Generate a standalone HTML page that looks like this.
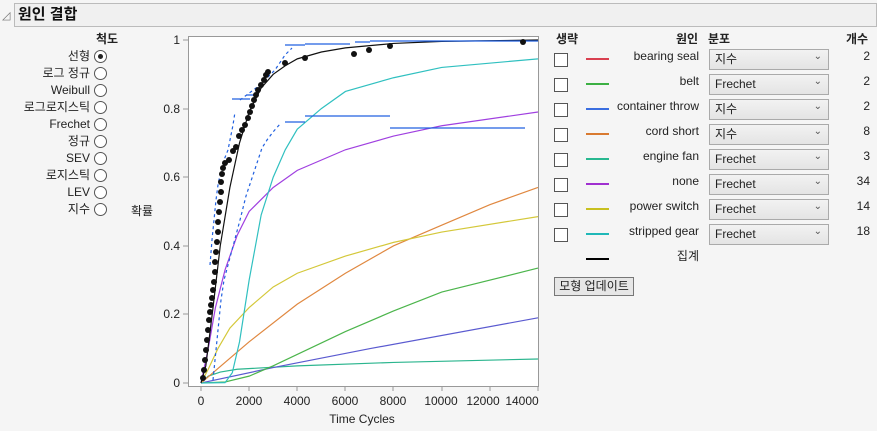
<!DOCTYPE html>
<html><head><meta charset="utf-8"><style>
body{margin:0;width:877px;height:431px;background:#f5f5f5;font-family:"Liberation Sans","Noto Sans CJK KR",sans-serif;font-size:12px;color:#222;position:relative;overflow:hidden}
.a{position:absolute;white-space:nowrap;line-height:16px}
.r{text-align:right}
.rad{position:absolute;width:11px;height:11px;border:1px solid #555;border-radius:50%;background:#fff}
.cb{position:absolute;width:12px;height:12px;border:1px solid #555;background:#fff}
.sw{position:absolute;width:23px;height:2px}
.dd{position:absolute;left:709px;width:118px;height:19px;border:1px solid #aaa;background:linear-gradient(#f2f2f2,#e4e4e4);font-size:12px;line-height:19px;text-indent:5px}
.dd:after{content:"⌄";position:absolute;right:6px;top:-3px;font-size:10px;color:#555}
</style></head><body>
<div class="a" style="left:2px;top:8px;font-size:11px;color:#777">◿</div>
<div class="a" style="left:14px;top:3px;width:861px;height:22px;background:#f0f0f0;border:1px solid #bbb"></div>
<div class="a" style="left:18px;top:5px;font-size:15px;line-height:20px;font-weight:bold;color:#111">원인 결합</div>

<div class="a" style="left:96px;top:31px;font-weight:bold">척도</div>
<div class="a r" style="right:787px;top:48px">선형</div><div class="rad" style="left:94px;top:50px"></div><div class="a" style="left:98px;top:54px;width:5px;height:5px;border-radius:50%;background:#222"></div>
<div class="a r" style="right:787px;top:65px">로그 정규</div><div class="rad" style="left:94px;top:67px"></div>
<div class="a r" style="right:787px;top:82px">Weibull</div><div class="rad" style="left:94px;top:84px"></div>
<div class="a r" style="right:787px;top:99px">로그로지스틱</div><div class="rad" style="left:94px;top:101px"></div>
<div class="a r" style="right:787px;top:116px">Frechet</div><div class="rad" style="left:94px;top:118px"></div>
<div class="a r" style="right:787px;top:133px">정규</div><div class="rad" style="left:94px;top:135px"></div>
<div class="a r" style="right:787px;top:150px">SEV</div><div class="rad" style="left:94px;top:152px"></div>
<div class="a r" style="right:787px;top:167px">로지스틱</div><div class="rad" style="left:94px;top:169px"></div>
<div class="a r" style="right:787px;top:184px">LEV</div><div class="rad" style="left:94px;top:186px"></div>
<div class="a r" style="right:787px;top:201px">지수</div><div class="rad" style="left:94px;top:203px"></div>
<div class="a" style="left:131px;top:203px">확률</div>

<svg class="a" style="left:0;top:0" width="877" height="431">
<rect x="188.5" y="36.5" width="350" height="350" fill="#fff" stroke="#999"/>
<g stroke="#999"><line x1="183" y1="40" x2="188" y2="40"/><line x1="183" y1="109" x2="188" y2="109"/><line x1="183" y1="177" x2="188" y2="177"/><line x1="183" y1="246" x2="188" y2="246"/><line x1="183" y1="314" x2="188" y2="314"/><line x1="183" y1="383" x2="188" y2="383"/>
<line x1="201" y1="387" x2="201" y2="391"/><line x1="249" y1="387" x2="249" y2="391"/><line x1="297" y1="387" x2="297" y2="391"/><line x1="345" y1="387" x2="345" y2="391"/><line x1="393" y1="387" x2="393" y2="391"/><line x1="442" y1="387" x2="442" y2="391"/><line x1="490" y1="387" x2="490" y2="391"/><line x1="538" y1="387" x2="538" y2="391"/></g>
<g font-family="Liberation Sans,sans-serif" font-size="12" fill="#222" text-anchor="end">
<text x="180" y="44">1</text><text x="180" y="113">0.8</text><text x="180" y="181">0.6</text><text x="180" y="250">0.4</text><text x="180" y="318">0.2</text><text x="180" y="387">0</text></g>
<g font-family="Liberation Sans,sans-serif" font-size="12" fill="#222" text-anchor="middle">
<text x="201" y="405">0</text><text x="249" y="405">2000</text><text x="297" y="405">4000</text><text x="345" y="405">6000</text><text x="393" y="405">8000</text><text x="441" y="405">10000</text><text x="483" y="405">12000</text><text x="522" y="405">14000</text>
<text x="362" y="423">Time Cycles</text></g>
<g transform="translate(201,383) scale(0.02407,-343)" fill="none" stroke-width="1.2">
<path vector-effect="non-scaling-stroke" stroke="#2bb58e" d="M0 0 L300 0.02 L800 0.032 L1500 0.04 L4000 0.05 L8000 0.06 L14000 0.07"/>
<path vector-effect="non-scaling-stroke" stroke="#5a5ad0" d="M0 0 L3000 0.045 L7000 0.1 L14000 0.19"/>
<path vector-effect="non-scaling-stroke" stroke="#4cb54c" d="M0 0 L1000 0.003 L2000 0.02 L3000 0.05 L4500 0.1 L6000 0.15 L8000 0.21 L10000 0.265 L14000 0.335"/>
<path vector-effect="non-scaling-stroke" stroke="#e08840" d="M0 0 L2000 0.12 L4000 0.23 L6000 0.32 L8000 0.4 L10000 0.46 L12000 0.52 L14000 0.57"/>
<path vector-effect="non-scaling-stroke" stroke="#d4c83a" d="M0 0 L300 0.04 L700 0.1 L1200 0.16 L2000 0.22 L3000 0.28 L4000 0.32 L6000 0.37 L8000 0.41 L10000 0.44 L14000 0.485"/>
<path vector-effect="non-scaling-stroke" stroke="#a040e0" d="M0 0 L300 0.1 L600 0.22 L1000 0.33 L1500 0.43 L2000 0.5 L3000 0.57 L4000 0.62 L6000 0.68 L8000 0.72 L10000 0.75 L14000 0.79"/>
<path vector-effect="non-scaling-stroke" stroke="#30c0c0" d="M0 0 L1000 0.001 L1300 0.03 L1600 0.12 L2000 0.3 L2500 0.49 L3000 0.6 L3500 0.68 L4000 0.74 L5000 0.8 L6000 0.85 L8000 0.89 L10000 0.92 L14000 0.945"/>
<path vector-effect="non-scaling-stroke" stroke="#111" d="M0 0 L200 0.05 L500 0.22 L800 0.4 L1200 0.57 L1600 0.7 L2000 0.79 L2500 0.86 L3000 0.9 L3500 0.925 L4000 0.945 L5000 0.965 L6000 0.977 L8000 0.99 L10000 0.996 L14000 1"/>
</g>
<g stroke="#2060e0" stroke-width="1.2" fill="none" stroke-dasharray="3 3">
<path d="M210 265 L212 240 L214 220 L216 200 L218 185 L221 170 L224 160 L228 150 L230 140 L233 125 L235 112"/>
<path d="M240 100 L260 85 L275 70 L285 55 L292 48"/>
<path d="M213 380 L215 360 L217 340 L219 320 L221 300 L224 280 L228 265 L232 250 L236 235 L240 220 L243 208 L246 196 L250 184 L254 172 L258 160 L262 148 L267 140 L273 132 L280 124"/>
</g>
<g stroke="#2060e0" stroke-width="1.2" fill="none">
<path d="M232 99 L250 99 M247 95 L257 95 M285 45 L305 45 M305 44 L350 44 M355 42 L370 42 M370 41 L538 41"/>
<path d="M285 122 L305 122 M305 116 L390 116 M390 128 L525 128"/>
</g>
<g fill="#111">
<circle cx="203" cy="378" r="3"/><circle cx="204" cy="370" r="3"/><circle cx="205" cy="360" r="3"/><circle cx="206" cy="350" r="3"/><circle cx="207" cy="340" r="3"/><circle cx="208" cy="330" r="3"/><circle cx="209" cy="320" r="3"/><circle cx="210" cy="312" r="3"/><circle cx="211" cy="305" r="3"/><circle cx="212" cy="298" r="3"/><circle cx="213" cy="290" r="3"/><circle cx="214" cy="282" r="3"/><circle cx="215" cy="272" r="3"/><circle cx="215" cy="262" r="3"/><circle cx="216" cy="252" r="3"/><circle cx="217" cy="242" r="3"/><circle cx="218" cy="232" r="3"/><circle cx="218" cy="222" r="3"/><circle cx="219" cy="212" r="3"/><circle cx="220" cy="202" r="3"/><circle cx="221" cy="192" r="3"/><circle cx="221" cy="182" r="3"/><circle cx="222" cy="174" r="3"/><circle cx="223" cy="168" r="3"/><circle cx="225" cy="163" r="3"/><circle cx="229" cy="160" r="3"/><circle cx="233" cy="151" r="3"/><circle cx="236" cy="147" r="3"/><circle cx="239" cy="136" r="3"/><circle cx="242" cy="130" r="3"/><circle cx="245" cy="125" r="3"/><circle cx="248" cy="118" r="3"/><circle cx="250" cy="112" r="3"/><circle cx="252" cy="106" r="3"/><circle cx="254" cy="100" r="3"/><circle cx="256" cy="95" r="3"/><circle cx="258" cy="90" r="3"/><circle cx="261" cy="85" r="3"/><circle cx="264" cy="80" r="3"/><circle cx="266" cy="75" r="3"/><circle cx="268" cy="72" r="3"/><circle cx="285" cy="63" r="3"/><circle cx="305" cy="58" r="3"/><circle cx="354" cy="54" r="3"/><circle cx="369" cy="50" r="3"/><circle cx="390" cy="46" r="3"/><circle cx="523" cy="42" r="3"/>
</g>
</svg>

<div class="a" style="left:556px;top:31px;font-weight:bold">생략</div>
<div class="a" style="left:676px;top:31px;font-weight:bold">원인</div>
<div class="a" style="left:708px;top:31px;font-weight:bold">분포</div>
<div class="a" style="left:846px;top:31px;font-weight:bold">개수</div>

<div class="cb" style="left:554px;top:53px"></div><div class="sw" style="left:586px;top:58px;background:#d94050"></div><div class="a r" style="right:178px;top:48px">bearing seal</div><div class="dd" style="top:49px">지수</div><div class="a r" style="right:7px;top:48px">2</div>
<div class="cb" style="left:554px;top:78px"></div><div class="sw" style="left:586px;top:83px;background:#3cb043"></div><div class="a r" style="right:178px;top:73px">belt</div><div class="dd" style="top:74px">Frechet</div><div class="a r" style="right:7px;top:73px">2</div>
<div class="cb" style="left:554px;top:103px"></div><div class="sw" style="left:586px;top:108px;background:#3a6ee0"></div><div class="a r" style="right:178px;top:98px">container throw</div><div class="dd" style="top:99px">지수</div><div class="a r" style="right:7px;top:98px">2</div>
<div class="cb" style="left:554px;top:128px"></div><div class="sw" style="left:586px;top:133px;background:#d97a30"></div><div class="a r" style="right:178px;top:123px">cord short</div><div class="dd" style="top:124px">지수</div><div class="a r" style="right:7px;top:123px">8</div>
<div class="cb" style="left:554px;top:153px"></div><div class="sw" style="left:586px;top:158px;background:#28b890"></div><div class="a r" style="right:178px;top:148px">engine fan</div><div class="dd" style="top:149px">Frechet</div><div class="a r" style="right:7px;top:148px">3</div>
<div class="cb" style="left:554px;top:178px"></div><div class="sw" style="left:586px;top:183px;background:#a030d0"></div><div class="a r" style="right:178px;top:173px">none</div><div class="dd" style="top:174px">Frechet</div><div class="a r" style="right:7px;top:173px">34</div>
<div class="cb" style="left:554px;top:203px"></div><div class="sw" style="left:586px;top:208px;background:#c8c020"></div><div class="a r" style="right:178px;top:198px">power switch</div><div class="dd" style="top:199px">Frechet</div><div class="a r" style="right:7px;top:198px">14</div>
<div class="cb" style="left:554px;top:228px"></div><div class="sw" style="left:586px;top:233px;background:#20b8b8"></div><div class="a r" style="right:178px;top:223px">stripped gear</div><div class="dd" style="top:224px">Frechet</div><div class="a r" style="right:7px;top:223px">18</div>
<div class="sw" style="left:586px;top:258px;background:#000"></div><div class="a r" style="right:178px;top:248px">집계</div>
<div class="a" style="left:554px;top:277px;width:78px;height:17px;border:1px solid #777;background:#e6e6e6;text-align:center;line-height:17px;font-size:12px">모형 업데이트</div>
</body></html>
